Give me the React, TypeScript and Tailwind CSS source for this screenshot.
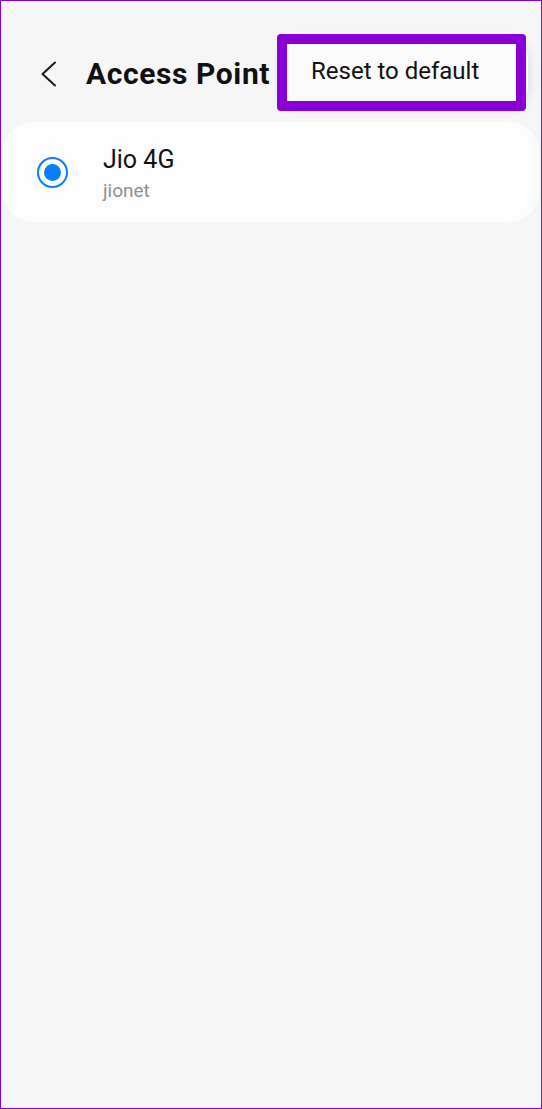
import React from "react";

export default function App() {
  return (
    <div
      className="relative w-[542px] h-[1109px] overflow-hidden border border-[#8a00d4] bg-[#f6f6f6]"
      style={{ fontFamily: "Roboto, 'Noto Sans', sans-serif" }}
    >
      {/* Header */}
      <header className="flex h-[121px] items-center pl-[38px] pt-[24px]">
        <button className="flex h-[28px] w-[20px] items-center justify-center">
          <svg width="18" height="26" viewBox="0 0 18 26" fill="none">
            <path
              d="M15 1.5 L2.5 13 L15 24.5"
              stroke="#1a1a1a"
              strokeWidth="2"
              strokeLinecap="round"
              strokeLinejoin="round"
            />
          </svg>
        </button>
        <h1 className="ml-[27px] text-[30px] font-bold leading-none tracking-[0.6px] text-[#111]">
          Access Point
        </h1>
      </header>

      {/* APN list */}
      <div className="mx-[2px] flex h-[100px] items-center rounded-[30px] bg-[#fdfdfd] pl-[34px]">
        <span className="flex h-[31px] w-[31px] items-center justify-center rounded-full border-2 border-[#0a7cff]">
          <span className="h-[17px] w-[17px] rounded-full bg-[#0a7cff]" />
        </span>
        <div className="ml-[35px] flex flex-col pt-[3px]">
          <span className="text-[25px] leading-[32px] text-[#111]">Jio 4G</span>
          <span className="text-[19px] leading-[26px] mt-[2px] text-[#8f8f8f]">jionet</span>
        </div>
      </div>

      {/* Overflow menu */}
      <div className="absolute left-[281px] top-[38px] h-[68px] w-[246px] rounded-[20px] bg-[#fbfbfb] shadow-[0_2px_12px_rgba(0,0,0,0.12)]" />
      <div className="absolute left-[276px] top-[33px] flex h-[77px] w-[249px] items-center rounded-[4px] border-[10px] border-[#8a00d4] pb-[4px] pl-[24px]">
        <span className="text-[24px] leading-none text-[#111]">Reset to default</span>
      </div>
    </div>
  );
}
